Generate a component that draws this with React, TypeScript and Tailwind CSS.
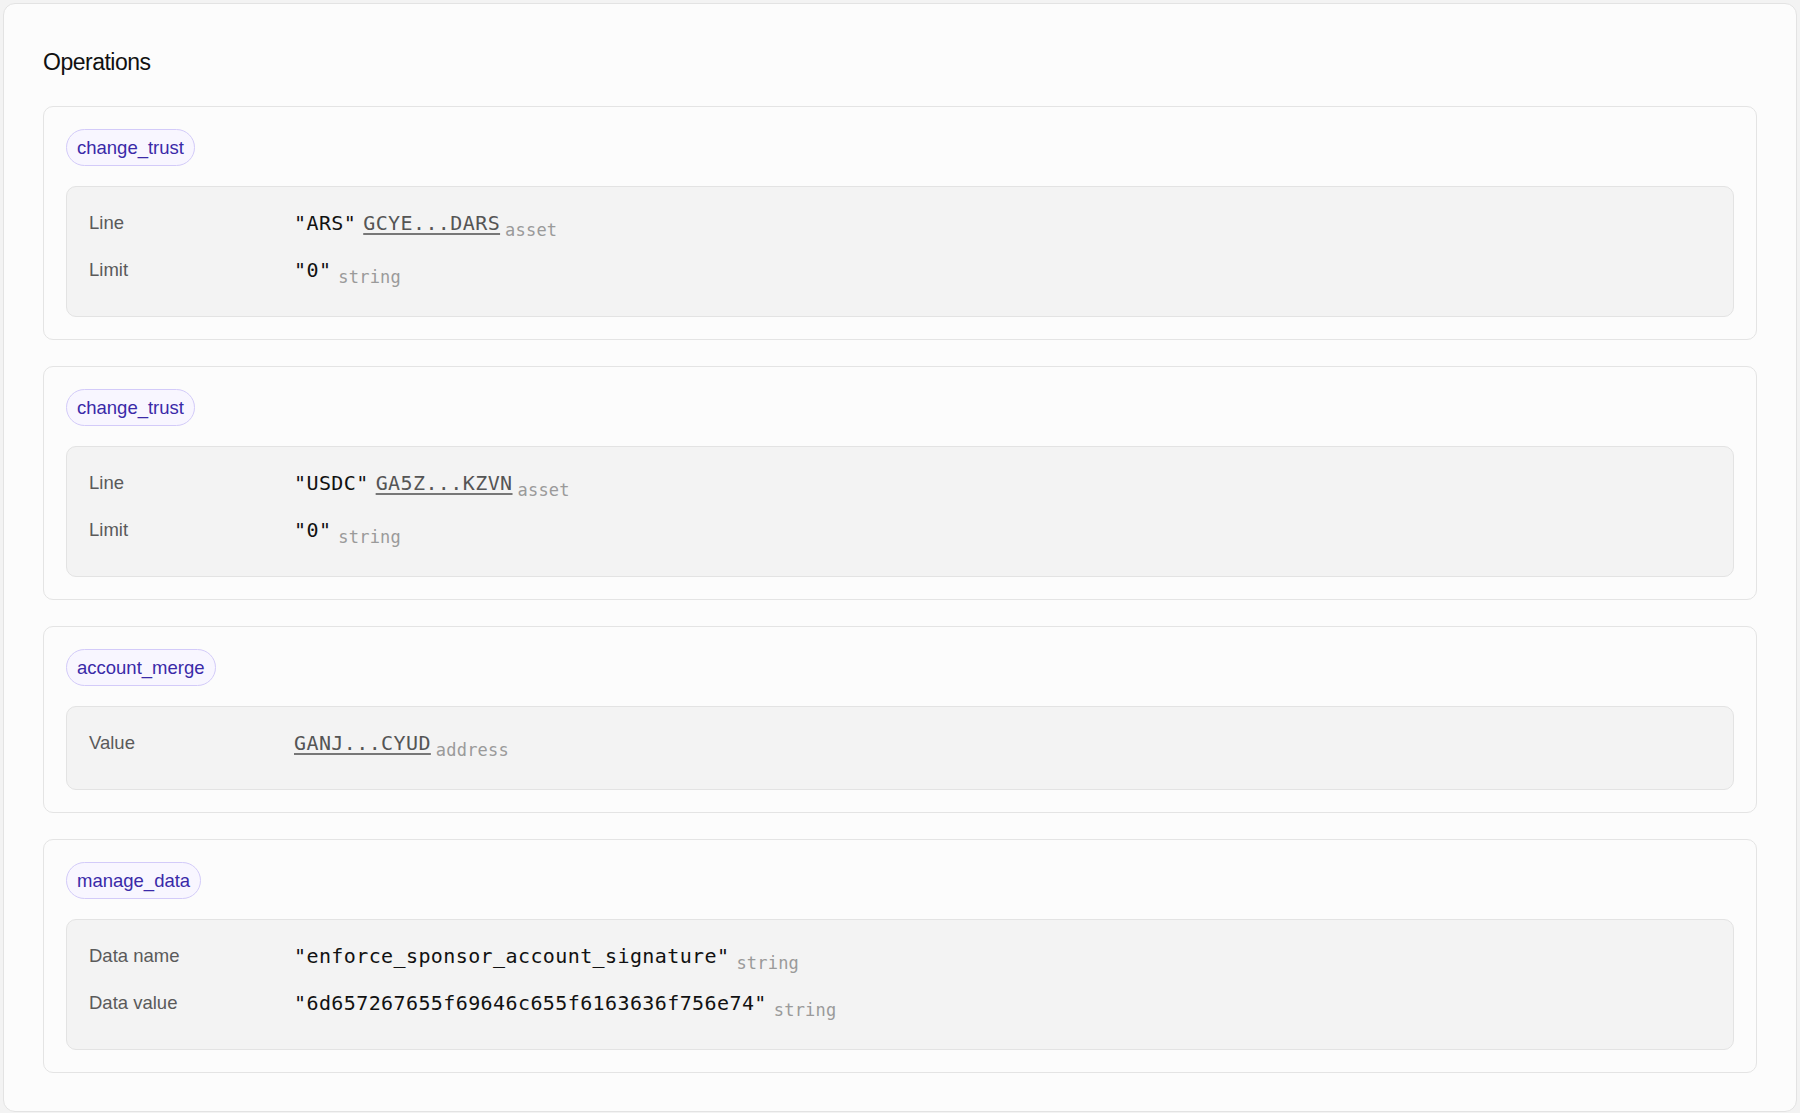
import React from 'react';

type Part =
  | { kind: 'text'; value: string }
  | { kind: 'link'; value: string }
  | { kind: 'type'; value: string };

interface Field {
  label: string;
  parts: Part[];
}

interface Operation {
  name: string;
  fields: Field[];
}

const operations: Operation[] = [
  {
    name: 'change_trust',
    fields: [
      {
        label: 'Line',
        parts: [
          { kind: 'text', value: '"ARS"' },
          { kind: 'link', value: 'GCYE...DARS' },
          { kind: 'type', value: 'asset' },
        ],
      },
      {
        label: 'Limit',
        parts: [
          { kind: 'text', value: '"0"' },
          { kind: 'type', value: 'string' },
        ],
      },
    ],
  },
  {
    name: 'change_trust',
    fields: [
      {
        label: 'Line',
        parts: [
          { kind: 'text', value: '"USDC"' },
          { kind: 'link', value: 'GA5Z...KZVN' },
          { kind: 'type', value: 'asset' },
        ],
      },
      {
        label: 'Limit',
        parts: [
          { kind: 'text', value: '"0"' },
          { kind: 'type', value: 'string' },
        ],
      },
    ],
  },
  {
    name: 'account_merge',
    fields: [
      {
        label: 'Value',
        parts: [
          { kind: 'link', value: 'GANJ...CYUD' },
          { kind: 'type', value: 'address' },
        ],
      },
    ],
  },
  {
    name: 'manage_data',
    fields: [
      {
        label: 'Data name',
        parts: [
          { kind: 'text', value: '"enforce_sponsor_account_signature"' },
          { kind: 'type', value: 'string' },
        ],
      },
      {
        label: 'Data value',
        parts: [
          { kind: 'text', value: '"6d657267655f69646c655f6163636f756e74"' },
          { kind: 'type', value: 'string' },
        ],
      },
    ],
  },
];

const ValuePart: React.FC<{ part: Part; first: boolean; prev?: Part }> = ({ part, first, prev }) => {
  let gap = '';
  if (!first) gap = prev && prev.kind === 'link' ? 'ml-[5px]' : 'ml-[7px]';
  if (part.kind === 'link') {
    return (
      <span className={`${gap} cursor-pointer text-[#555] underline decoration-[#777] underline-offset-[3px]`}>
        {part.value}
      </span>
    );
  }
  if (part.kind === 'type') {
    return (
      <span className={`${gap} align-[-6px] text-[17px] tracking-[0.2px] text-[#9a9a9a]`}>{part.value}</span>
    );
  }
  return <span className={`${gap} text-[#111]`}>{part.value}</span>;
};

const OperationCard: React.FC<{ op: Operation }> = ({ op }) => {
  return (
    <div className="rounded-[10px] border border-[#e4e4e4] bg-[#fcfcfc] p-[22px]">
      <div className="flex">
        <span className="flex h-[37px] items-center rounded-full border border-[#d3cbf9] bg-[#f8f6ff] px-[10px] text-[18.5px] text-[#3a2aa8]">
          {op.name}
        </span>
      </div>
      <div className="mt-[20px] flex flex-col gap-[11px] rounded-[10px] border border-[#e3e3e3] bg-[#f3f3f3] pl-[22px] pr-[21px] pt-[22px] pb-[24px]">
        {op.fields.map((field, i) => (
          <div key={i} className="flex h-[36px]">
            <div className="w-[205px] shrink-0 text-[18.5px] leading-[28px] text-[#5a5a5a]">{field.label}</div>
            <div className="whitespace-nowrap font-['DejaVu_Sans_Mono',monospace] text-[20px] leading-[28px] tracking-[0.4px]">
              {field.parts.map((part, j) => (
                <ValuePart key={j} part={part} first={j === 0} prev={field.parts[j - 1]} />
              ))}
            </div>
          </div>
        ))}
      </div>
    </div>
  );
};

export default function App() {
  return (
    <div className="min-h-screen bg-[#f3f3f3] p-[3px] font-['Liberation_Sans',Arial,sans-serif]">
      <div className="rounded-[12px] border border-[#e3e3e3] bg-[#fcfcfc] px-[39px] pt-[42px] pb-[38px]">
        <h2 className="text-[23px] leading-[32px] tracking-[-0.5px] text-[#111]">Operations</h2>
        <div className="mt-[28px] flex flex-col gap-[26px]">
          {operations.map((op, i) => (
            <OperationCard key={i} op={op} />
          ))}
        </div>
      </div>
    </div>
  );
}
